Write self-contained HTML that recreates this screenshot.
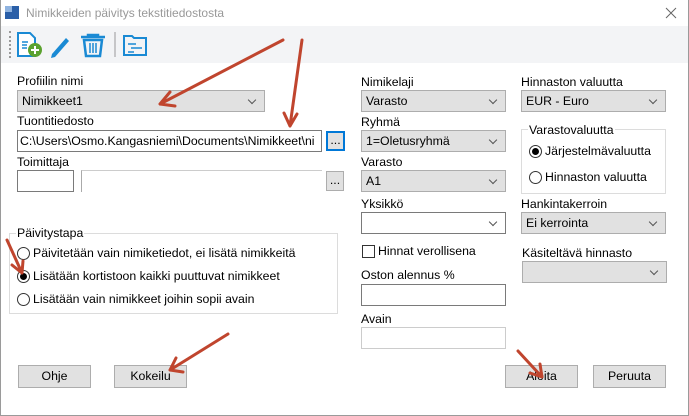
<!DOCTYPE html>
<html><head><meta charset="utf-8"><style>
*{box-sizing:border-box;margin:0;padding:0}
body{width:689px;height:416px;background:#fff;font-family:"Liberation Sans",sans-serif;font-size:12.3px;color:#000;position:relative;overflow:hidden}
.a{position:absolute;white-space:nowrap}
.cb{position:absolute;height:22px;background:#e1e1e1;border:1px solid #adadad;padding:3px 0 0 4px}
.cb.w{background:#fff;border-color:#7a7a7a}
.cb:after{content:"";position:absolute;right:9px;top:6px;width:5px;height:5px;border-right:1px solid #555;border-bottom:1px solid #555;transform:rotate(45deg)}
.tb{position:absolute;height:22px;background:#fff;border:1px solid #7a7a7a}
.btn{position:absolute;height:23px;background:#e1e1e1;border:1px solid #adadad;text-align:center;line-height:20px}
.rd{position:absolute;width:13px;height:13px;border:1px solid #333;border-radius:50%;background:#fff}
.rd.on:after{content:"";position:absolute;left:2px;top:2px;width:7px;height:7px;border-radius:50%;background:#000}
.grp{position:absolute;border:1px solid #dcdcdc}
</style></head><body>
<div class="a" style="left:0;top:0;width:689px;height:416px;border:1px solid #9a9a9a;border-top:none"></div>
<div class="a" style="left:5px;top:6px;width:14px;height:13px;background:#2a5fa8"></div>
<div class="a" style="left:5px;top:6px;width:7px;height:6px;background:#8fb3e0"></div>
<div class="a" style="left:26px;top:6px;color:#999;font-size:12px">Nimikkeiden päivitys tekstitiedostosta</div>
<svg class="a" style="left:665px;top:7px" width="12" height="12"><path d="M1 1L11 11M11 1L1 11" stroke="#666" stroke-width="1"/></svg>
<div class="a" style="left:1px;top:26px;width:687px;height:37px;background:#f3f4f6"></div>
<div class="a" style="left:9px;top:31px;width:1px;height:27px;border-left:2px dotted #999"></div>
<svg class="a" style="left:0;top:25px" width="160" height="40">
<path d="M18 8H30L35 13V31H18Z" fill="#fff" stroke="#1a8ad4" stroke-width="2"/>
<path d="M22 17h6M22 20h5M22 23h5" stroke="#1a8ad4" stroke-width="1.5"/>
<circle cx="35" cy="25" r="7" fill="#5ba22f"/><path d="M31 25h8M35 21v8" stroke="#fff" stroke-width="2"/>
<path d="M52 29L66 13L69 16L55 32L51 33Z" fill="#1a8ad4"/>
<path d="M81 12h24M88 12v-2h10v2" stroke="#1a8ad4" stroke-width="2.5" fill="none"/>
<path d="M84 15h18l-2 16h-14Z" fill="none" stroke="#1a8ad4" stroke-width="2.5"/>
<path d="M90 18v10M93 18v10M96 18v10" stroke="#1a8ad4" stroke-width="1.5"/>
<path d="M115 7v25" stroke="#999"/>
<path d="M124 11h8l2 2h12v17h-22Z" fill="none" stroke="#1a8ad4" stroke-width="2"/>
<path d="M128 19h8M131 23h11M128 27h6" stroke="#1a8ad4" stroke-width="1.5"/>
</svg>

<div class="a" style="left:17px;top:74px">Profiilin nimi</div>
<div class="cb" style="left:17px;top:90px;width:248px">Nimikkeet1</div>
<div class="a" style="left:17px;top:114px">Tuontitiedosto</div>
<div class="tb" style="left:17px;top:130px;width:305px;padding:3px 0 0 2px;overflow:hidden">C:\Users\Osmo.Kangasniemi\Documents\Nimikkeet\ni</div>
<div class="btn" style="left:326px;top:131px;width:19px;height:20px;border:2px solid #0078d7;line-height:14px">...</div>
<div class="a" style="left:17px;top:155px">Toimittaja</div>
<div class="tb" style="left:17px;top:170px;width:57px"></div>
<div class="a" style="left:81px;top:170px;width:241px;height:22px;border-left:1px solid #aaa;border-top:1px solid #ccc"></div>
<div class="btn" style="left:326px;top:171px;width:18px;height:20px;line-height:16px">...</div>

<div class="grp" style="left:9px;top:233px;width:329px;height:81px"></div>
<div class="a" style="left:16px;top:226px;background:#fff;padding:0 1px">Päivitystapa</div>
<div class="rd" style="left:17px;top:247px"></div><div class="a" style="left:33px;top:246px">Päivitetään vain nimiketiedot, ei lisätä nimikkeitä</div>
<div class="rd on" style="left:17px;top:270px"></div><div class="a" style="left:33px;top:269px">Lisätään kortistoon kaikki puuttuvat nimikkeet</div>
<div class="rd" style="left:17px;top:293px"></div><div class="a" style="left:33px;top:292px">Lisätään vain nimikkeet joihin sopii avain</div>

<div class="btn" style="left:18px;top:365px;width:73px">Ohje</div>
<div class="btn" style="left:114px;top:365px;width:73px">Kokeilu</div>
<div class="btn" style="left:505px;top:365px;width:73px">Aloita</div>
<div class="btn" style="left:593px;top:365px;width:73px">Peruuta</div>

<div class="a" style="left:361px;top:75px">Nimikelaji</div>
<div class="cb" style="left:361px;top:90px;width:145px">Varasto</div>
<div class="a" style="left:361px;top:115px">Ryhmä</div>
<div class="cb" style="left:361px;top:130px;width:145px">1=Oletusryhmä</div>
<div class="a" style="left:361px;top:155px">Varasto</div>
<div class="cb" style="left:361px;top:170px;width:145px">A1</div>
<div class="a" style="left:361px;top:197px">Yksikkö</div>
<div class="cb w" style="left:361px;top:212px;width:145px"></div>
<div class="a" style="left:362px;top:245px;width:13px;height:13px;border:1px solid #333"></div>
<div class="a" style="left:378px;top:244px">Hinnat verollisena</div>
<div class="a" style="left:361px;top:268px">Oston alennus %</div>
<div class="tb" style="left:361px;top:284px;width:145px"></div>
<div class="a" style="left:361px;top:312px">Avain</div>
<div class="tb" style="left:361px;top:327px;width:145px;border-color:#ccc"></div>

<div class="a" style="left:521px;top:75px">Hinnaston valuutta</div>
<div class="cb" style="left:521px;top:90px;width:145px">EUR - Euro</div>
<div class="grp" style="left:521px;top:129px;width:145px;height:65px"></div>
<div class="a" style="left:528px;top:123px;background:#fff;padding:0 1px">Varastovaluutta</div>
<div class="rd on" style="left:529px;top:145px"></div><div class="a" style="left:545px;top:144px">Järjestelmävaluutta</div>
<div class="rd" style="left:529px;top:171px"></div><div class="a" style="left:545px;top:170px">Hinnaston valuutta</div>
<div class="a" style="left:521px;top:197px">Hankintakerroin</div>
<div class="cb" style="left:521px;top:212px;width:145px">Ei kerrointa</div>
<div class="a" style="left:522px;top:246px">Käsiteltävä hinnasto</div>
<div class="cb" style="left:522px;top:261px;width:145px"></div>

<svg class="a" style="left:0;top:0" width="689" height="416">
<g stroke="#c0452e" stroke-width="3" fill="none" stroke-linecap="round">
<path d="M283 40L160 104M160 104L170 92M160 104L175 106"/>
<path d="M302 40L290 126M290 126L284 113M290 126L297 114"/>
<path d="M7 240L22 273M22 273L12 265M22 273L23 261"/>
<path d="M228 334L170 370M170 370L176 358M170 370L183 372"/>
<path d="M518 351L542 377M542 377L530 373M542 377L540 364"/>
</g></svg>
</body></html>
